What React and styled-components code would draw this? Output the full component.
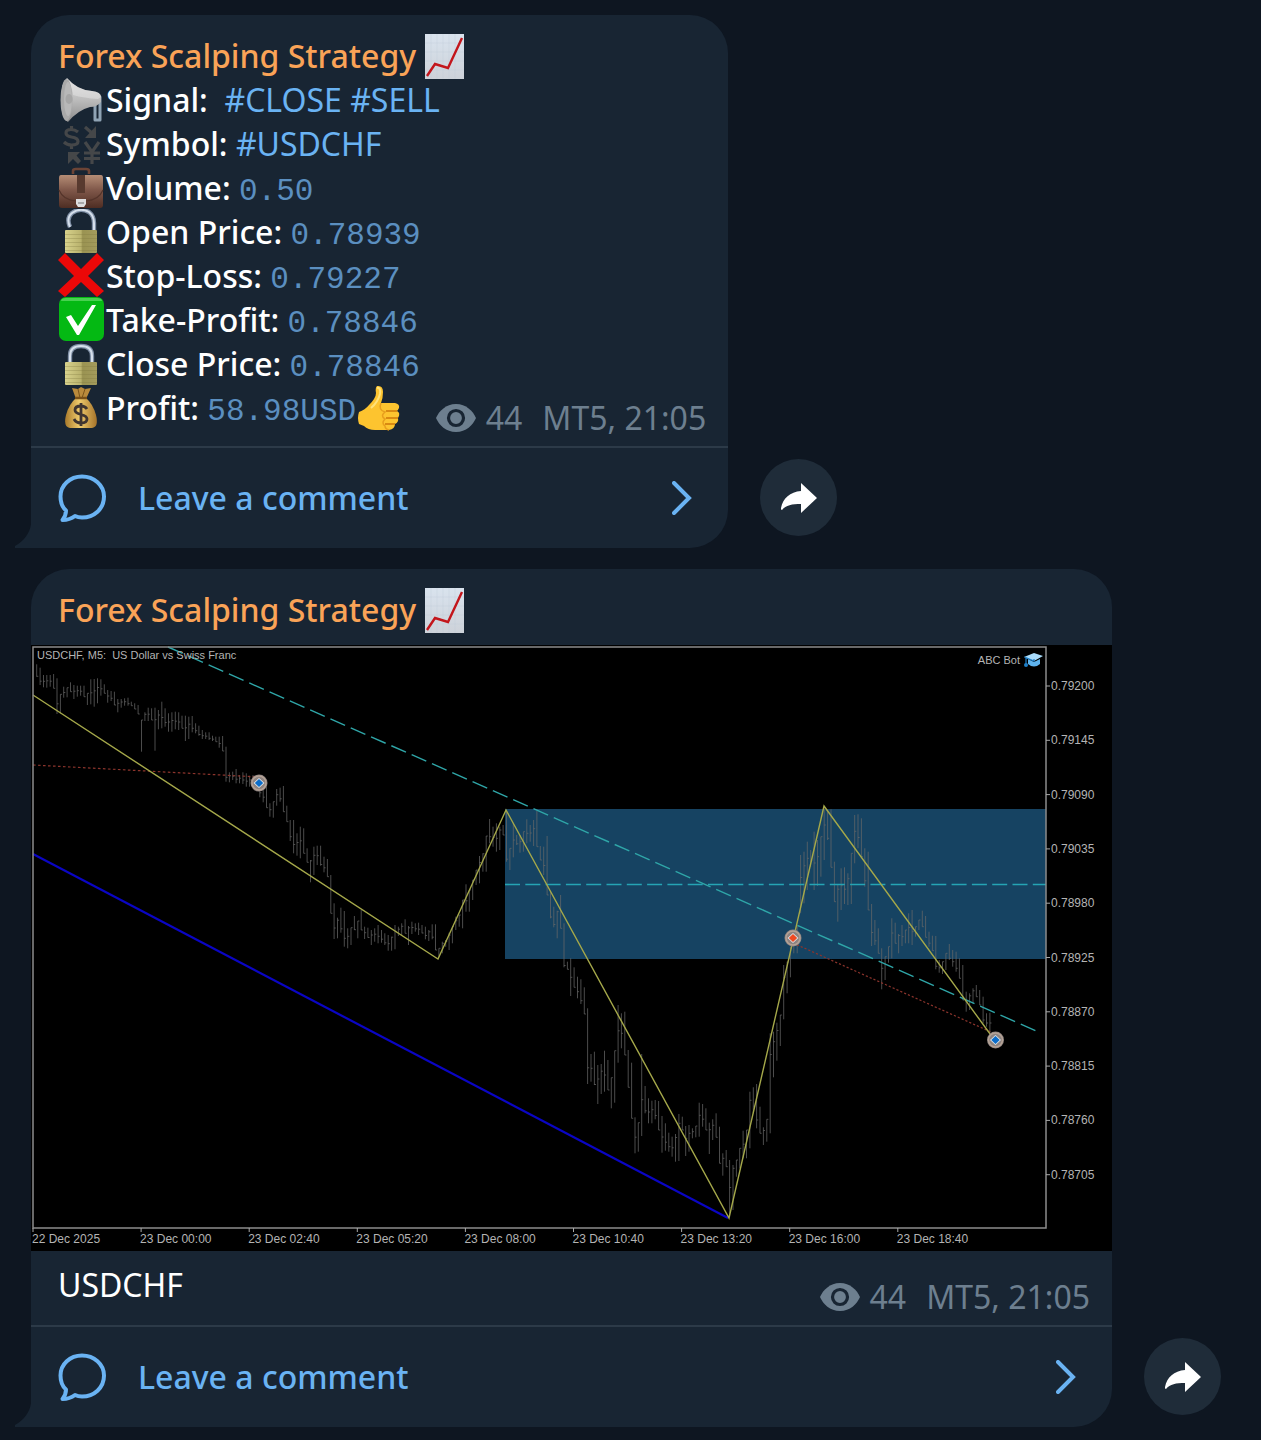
import styled, { createGlobalStyle } from "styled-components";

const signal = [
    {icon: "speaker", label: "Signal:\u00a0", tags: ["#CLOSE", "#SELL"]},
    {icon: "exchange", label: "Symbol:", tags: ["#USDCHF"]},
    {icon: "briefcase", label: "Volume:", value: "0.50"},
    {icon: "unlocked", label: "Open Price:", value: "0.78939"},
    {icon: "cross", label: "Stop-Loss:", value: "0.79227"},
    {icon: "check", label: "Take-Profit:", value: "0.78846"},
    {icon: "locked", label: "Close Price:", value: "0.78846"},
    {icon: "bag", label: "Profit:", value: "58.98USD", after: "thumb"},
];

// high/low of every M5 bar, three units to a pixel, measured from base
const barRuns = [
    {base: -10, bars: `88/125 98/150 120/157 120/158 120/155 117/160 130/237 178/235 155/188 158/187 142/170 150/192
    152/185 152/182 152/185 175/210 133/208 132/215 130/205 133/182 148/175 165/203 168/198 170/210 192/232 192/218
    190/212 188/212 200/212 205/222 210/237 255/350 232/258 218/258 220/255 218/347 225/283 200/280 220/275 235/290
    232/290 230/283 232/285 242/280 242/318 245/312 243/292 265/295 272/302 285/312 292/312 292/315 302/318 305/320
    305/338 303/348 335/440 412/442 410/435 402/445 420/445 412/447 415/455 422/455 420/450 425/460 440/487 445/502
    455/518 505/545 500/548 462/512 458/500 453/530 512/560 555/618 555/655 595/662 575/670 580/655 640/682 675/742
    635/720 632/690 632/692 665/712 672/725 720/835 805/912 848/910 818/893 828/935 880/940 878/930 843/885 858/910
    825/885 875/912 878/908 885/930 880/920 870/925`},
    {base: 135, bars: `450/488 460/495 465/512 470/512 435/508 440/468 430/465 418/460 438/495 425/462 430/455 428/465
    435/460 440/478 450/483 433/478 433/510 505/530 485/520 480/500 458/510 440/490 410/450 405/440 360/445 313/395
    330/395 300/360 270/315 228/310 220/275 168/275 117/190 140/200 130/215 140/210 135/165 95/245 205/270 130/232
    165/195 165/218 155/215 118/190 135/185 120/198 92/200 198/240 200/285 168/345 335/415 380/442 392/475 345/445
    430/562 545/568 535/648 562/622 590/655 598/672 622/702 685/912 822/905 815/915 855/972 852/942 812/935 840/930
    893/985 812/968 675/848 700/805 695/825 810/922 848/1015 1012/1120 1028/1115 822/1068 918/1000 955/1030 962/1030
    960/1018 963/1050 1008/1118 1030/1112 1058/1115 1070/1130 1062/1145 1002/1143 1010/1050 1038/1128 1035/1115
    1045/1075 1038/1072 968/1070 972/1040 985/1050 1028/1122 1018/1080 1000/1072 1040/1150 1120/1187 1110/1160
    1140/1310 1155/1290 1140/1190 1105/1165 1052/1135 1050/1135 935/1105 922/1000 912/1045 980/1060 1042/1095
    1018/1085 760/1060 755/892 728/842 705/798 555/718 545/640 500/592 490/520 440/520 225/400 215/370 185/330
    210/260 155/330 180/318 170/290 85/240 90/180 88/262 245/365 315/425 265/390 262/372 280/375 220/372 105/250
    103/205 115/230 205/320 215/390 372/498 420/495 445/520 505/628 530/600 500/548 415/535 428/490 462/520 435/498
    450/490 400/490 390/495 440/470 420/450 392/440 408/472 455/500 467/512 468/568 540/578 545/582 520/570 492/540
    510/560 515/575 535/595 555/660 635/695 640/690 625/670 615/650 630/675 650/730 700/740 698/760`},
];

const bars = barRuns.flatMap(({base, bars}) =>
    bars.trim().split(/\s+/).map((bar) => bar.split("/").map((v) => base + v / 3))
);

const prices = ["0.79200", "0.79145", "0.79090", "0.79035", "0.78980", "0.78925", "0.78870", "0.78815", "0.78760", "0.78705"];
const times = ["22 Dec 2025", "23 Dec 00:00", "23 Dec 02:40", "23 Dec 05:20", "23 Dec 08:00", "23 Dec 10:40", "23 Dec 13:20", "23 Dec 16:00", "23 Dec 18:40"];

const barPath = bars.map(([high, low], i) => {
    const x = 5.7 + i * 3.38;
    const next = bars[i + 1] || [high, low];
    const close = Math.min(low, Math.max(high, (next[0] + next[1]) / 2));
    return `M${x.toFixed(1)} ${high.toFixed(1)}V${low.toFixed(1)}M${x.toFixed(1)} ${close.toFixed(1)}h1.6`;
}).join("");

const Marker = ({x, y, color}) => (
    <g transform={`translate(${x} ${y})`}>
        <circle r="8.5" fill="#8d8380" />
        <circle r="7" fill="none" stroke="#b5a295" strokeWidth="1.5" />
        <path d="M-5.5 0L0-5L5.5 0L0 5Z" fill="#dfe5e9" />
        <path d="M-4.2 0L0-4L4.2 0L0 4Z" fill={color} />
    </g>
);

const Chart = () => (
    <ChartSvg viewBox="0 0 1081 606" role="img" aria-label="USDCHF M5 chart">
        <rect width="1081" height="606" fill="#000" />
        <rect x="474" y="164" width="541" height="150" fill="#164362" />
        <path d={barPath} stroke="#6a6a6a" strokeOpacity="0.72" fill="none" />
        <path d="M2 209L697 573" stroke="#0a05c4" strokeWidth="2.2" />
        <path d="M2 120L228 132" stroke="#8c342c" strokeWidth="1.2" strokeDasharray="2.6 2.4" />
        <path d="M762 298L960 387" stroke="#8c342c" strokeWidth="1.2" strokeDasharray="2.2 2" />
        <path d="M137 2L1010 388" stroke="#2fa6a8" strokeWidth="1.4" strokeDasharray="16 6.2" />
        <path d="M474 239.5H1015" stroke="#25a4b4" strokeWidth="1.6" strokeDasharray="15 5.3" />
        <path d="M2 50L407 314L475 165L698 573L793 161L962 393" stroke="#a5a84a" strokeWidth="1.4" fill="none" />
        <path d="M2 583V2H1015V583Z" fill="none" stroke="#8c8c8c" strokeWidth="1.5" />
        <Marker x={228} y={138} color="#0a6cc9" />
        <Marker x={762} y={293} color="#ee4a22" />
        <Marker x={964.5} y={395} color="#0a6cc9" />
        <ChartTitle x="6" y="14">{"USDCHF, M5:\u00a0 US Dollar vs Swiss Franc"}</ChartTitle>
        <ChartTitle x="989" y="19" textAnchor="end">ABC Bot</ChartTitle>
        <path d="M993 12L1003 8L1012 11L1003 16Z" fill="#a9dcfb" />
        <path d="M997 14L1003 17L1009 14V19Q1003 24 997 19Z" fill="#5fb4ee" />
        <path d="M993.5 12L1003 16V14M995 13V19" stroke="#1e7fc8" strokeWidth="1.2" fill="none" />
        <circle cx="995" cy="20" r="2" fill="#1e7fc8" />
        {prices.map((price, i) => (
            <g key={price}>
                <path d={`M1015 ${41 + i * 54.3}h4`} stroke="#a8a8a8" />
                <ChartText x="1020" y={45 + i * 54.3}>{price}</ChartText>
            </g>
        ))}
        {times.map((time, i) => (
            <g key={time}>
                <path d={`M${2 + i * 108.1} 583v4`} stroke="#a8a8a8" />
                <ChartText x={1 + i * 108.1} y="598">{time}</ChartText>
            </g>
        ))}
    </ChartSvg>
);

const Shackle = ({d}) => (
    <>
        <path d={d} fill="none" stroke="#7f8fa5" strokeWidth="4.4" />
        <path d={d} fill="none" stroke="#d5dfeb" strokeWidth="2" />
    </>
);

const LockBody = () => (
    <>
        <rect x="7" y="21" width="32" height="23" rx="1" fill="url(#brass)" />
        <path d="M7 25.5H39M7 29.5H39M7 33.5H39M7 37.5H39M7 41.5H39" stroke="#7d7840" strokeOpacity="0.3" />
    </>
);

const drawings = {
    speaker: (
        <>
            <path d="M34 20H42V43H37V27" fill="none" stroke="#8fa3b4" strokeWidth="3" strokeLinejoin="round" />
            <path d="M9 1Q19 13 34 14Q43 15 43 20V25Q39 30 32 30Q20 33 10 45Q3 41 3 23Q3 6 9 1Z" fill="url(#steel)" />
            <path d="M10 2Q19 13 34 14Q43 15 43 20L40 22Q26 21 15 18Q14 8 10 2Z" fill="#f1f1f1" fillOpacity="0.4" />
            <ellipse cx="8.5" cy="23" rx="6" ry="21" fill="#a9a9a9" />
            <ellipse cx="10" cy="22" rx="4" ry="17" fill="#b8b8b8" />
            <ellipse cx="11" cy="22" rx="3.5" ry="5" fill="#a6a6a6" />
        </>
    ),
    exchange: (
        <g fill="none" stroke="#454749" strokeWidth="3.2">
            <path d="M20 11Q17 8.5 13 8.5Q8 8.5 8 12Q8 15 13.5 16Q20 17 20 20.5Q20 24 13.5 24Q9 24 6 21M13.5 5V9M13.5 24V28" />
            <path d="M27 21L34 31L41 21M34 30V43M26 32H42M26 37.5H42" />
            <path d="M27 6L35 13" />
            <path d="M38 5V17H27Z" fill="#454749" stroke="none" />
            <path d="M10 31H22L18.5 34.5L23 40L20 43L15 38L10 43Z" fill="#454749" stroke="none" />
        </g>
    ),
    briefcase: (
        <>
            <path d="M15 9V6Q15 4 18 4H28Q31 4 31 6V9" fill="none" stroke="#6c4436" strokeWidth="2.6" />
            <path d="M3 10H43Q45 10 45 13V40Q45 43 42 43H4Q1 43 1 40V13Q1 10 3 10Z" fill="url(#leather)" />
            <path d="M1 25Q5 35 18 36H28Q41 35 45 25" fill="none" stroke="#54342a" strokeWidth="1.2" />
            <rect x="19" y="10" width="8" height="18" fill="#583a2f" />
            <path d="M18 34H28V39L26 42H20L18 39Z" fill="#dededf" />
            <path d="M20 38H26" stroke="#a9aaab" strokeWidth="2" />
        </>
    ),
    unlocked: (
        <>
            <Shackle d="M12 18Q8 9 14 4Q22-2 31 3Q36 7 36 14V21" />
            <LockBody />
        </>
    ),
    locked: (
        <>
            <Shackle d="M12 21V15Q12 5 23 5Q34 5 34 15V21" />
            <LockBody />
        </>
    ),
    cross: <path d="M7 0L23 16L39 0L46 7L30 23L46 38L39 44L23 29L7 44L0 38L16 23L0 7Z" fill="#ec0808" />,
    check: (
        <>
            <rect x="1" width="45" height="44" rx="7" fill="#04b913" />
            <path d="M8 1H39Q44 1 44 4H3Q3 1 8 1Z" fill="#65dc6b" fillOpacity="0.7" />
            <path d="M8 20L13 18L20 29L34 8H38L21 38H19Z" fill="#fff" />
        </>
    ),
    bag: (
        <>
            <path d="M14 3L20 4L23 2L27 4L33 3L28 14H18Z" fill="#b98a3c" />
            <path d="M20 4L22 13M27 4L24 13" stroke="#79531a" />
            <path d="M18 13H28Q35 19 38 30Q41 42 34 43H12Q5 42 8 30Q11 19 18 13Z" fill="url(#gold)" />
            <path d="M17 13H29" stroke="#795018" strokeWidth="2.5" />
            <path d="M29 24Q27 21 23 21Q17 21 17 25Q17 28 23 29.5Q29 31 29 34Q29 38 23 38Q18 38 16 34M23 18V41" fill="none" stroke="#3f3530" strokeWidth="2.8" />
        </>
    ),
    thumb: (
        <>
            <path d="M21 1Q27 0 27 7Q27 13 25 18H39Q44 19 43 23Q42 25 41 26Q45 28 42 33Q43 37 39 39Q39 44 33 45H19Q12 45 8 41L3 39Q1 33 3 27Q9 25 13 20Q20 13 20 8Q19 3 21 1Z" fill="#fdc42f" />
            <path d="M41 26H30M42 33H30M39 39H29" stroke="#d98a12" strokeWidth="1.8" />
            <path d="M25 18Q22 25 29 27Q24 31 29 34Q25 38 29 41Q29 44 33 45" fill="none" stroke="#e79e1d" strokeWidth="1.5" />
            <path d="M21 3Q25 2 24 9Q22 17 15 23" fill="none" stroke="#ffe27a" strokeWidth="2" />
        </>
    ),
    trend: (
        <>
            <rect x="1" y="1" width="39" height="45" fill="url(#paper)" />
            <path d="M7 1V46M13 1V46M19 1V46M25 1V46M31 1V46M1 10H40M1 19H40M1 28H40M1 37H40" stroke="#b8c6d6" strokeOpacity="0.3" />
            <path d="M3 43L11 31L24 35L38 5" fill="none" stroke="#c3161c" strokeWidth="2.4" />
        </>
    ),
};

const Emoji = ({name}) => (
    <EmojiSvg viewBox="0 0 47 46" aria-hidden="true">{drawings[name]}</EmojiSvg>
);

// gradients shared by the emoji
const Gradients = () => (
    <Defs aria-hidden="true">
        <linearGradient id="brass">
            <stop offset="0" stopColor="#d8d28c" />
            <stop offset="0.5" stopColor="#b9b26d" />
            <stop offset="0.55" stopColor="#9a9352" />
            <stop offset="1" stopColor="#a39b5c" />
        </linearGradient>
        <linearGradient id="steel" x2="0" y2="1">
            <stop offset="0" stopColor="#dcdcdc" />
            <stop offset="0.5" stopColor="#bcbcbc" />
            <stop offset="1" stopColor="#8b8b8b" />
        </linearGradient>
        <linearGradient id="leather" x2="0" y2="1">
            <stop offset="0" stopColor="#b58d76" />
            <stop offset="0.45" stopColor="#80584a" />
            <stop offset="1" stopColor="#4e2d23" />
        </linearGradient>
        <linearGradient id="gold">
            <stop offset="0" stopColor="#a97a2b" />
            <stop offset="0.45" stopColor="#efcb6c" />
            <stop offset="1" stopColor="#a5732a" />
        </linearGradient>
        <linearGradient id="paper" x2="0" y2="1">
            <stop offset="0" stopColor="#d9e3ee" />
            <stop offset="1" stopColor="#cdd2d9" />
        </linearGradient>
    </Defs>
);

const Meta = ({views, author, time}) => (
    <MetaRow>
        <EyeSvg viewBox="0 0 40 28" role="img" aria-label="Views">
            <path d="M20 0C30 0 37 7 40 14C37 21 30 28 20 28C10 28 3 21 0 14C3 7 10 0 20 0Z" fill="#6d7f8f" />
            <circle cx="20" cy="14" r="7.5" fill="none" stroke="#182533" strokeWidth="3.2" />
        </EyeSvg>
        <span>{views}</span>
        <Author>{author}, {time}</Author>
    </MetaRow>
);

const Post = ({wide, children}) => (
    <PostRow>
        <Bubble $wide={wide}>
            <Header>
                Forex Scalping Strategy <Emoji name="trend" />
            </Header>
            {children}
            <CommentButton type="button">
                <CommentSvg viewBox="0 0 48 48" aria-hidden="true">
                    <path d="M24 2.5C36 2.5 46 11 46 22.5C46 35 36 43.5 24 43.5C21 43.5 19 43 17 42C13 45 9 46 4.5 46C7 43 8 40 8 36.5C4 33 2.5 28 2.5 22.5C2.5 11 12 2.5 24 2.5Z" />
                </CommentSvg>
                <span>Leave a comment</span>
                <ChevronSvg viewBox="0 0 20 34" aria-hidden="true">
                    <path d="M2 2L17 17L2 32" />
                </ChevronSvg>
            </CommentButton>
            <TailSvg viewBox="0 0 16 24" aria-hidden="true">
                <path d="M16 0C15 9 9 17 0 22V24H16Z" fill="#182533" />
            </TailSvg>
        </Bubble>
        <ShareButton type="button" aria-label="Share">
            <svg width="36" height="32" viewBox="0 0 36 32" aria-hidden="true">
                <path d="M20 1L36 16L20 31V22C11 22 5 23 1 28C0 28 0 27 0 26C2 16 9 10 20 9Z" fill="#fff" />
            </svg>
        </ShareButton>
    </PostRow>
);

const App = () => (
    <>
        <GlobalStyle />
        <Gradients />
        <Feed>
            <Post>
                <Body>
                    <Fields>
                        {signal.map(({icon, label, tags, value, after}) => (
                            <Field key={label}>
                                <Emoji name={icon} />
                                <Label>{label}</Label>
                                {tags && tags.map((tag) => (
                                    <span key={tag}> <Tag href={tag}>{tag}</Tag></span>
                                ))}
                                {value && <span> <Value>{value}</Value></span>}
                                {after && <Emoji name={after} />}
                            </Field>
                        ))}
                    </Fields>
                    <Meta views="44" author="MT5" time="21:05" />
                </Body>
            </Post>
            <Post wide>
                <Chart />
                <Body>
                    <Caption>USDCHF</Caption>
                    <Meta views="44" author="MT5" time="21:05" />
                </Body>
            </Post>
        </Feed>
    </>
);

export default App;

const GlobalStyle = createGlobalStyle`
body{
    margin: 0;
    background: #0e1621;
    color: #fff;
    font-family: "Noto Sans", "Open Sans", sans-serif;
    font-size: 32px;
    line-height: 44px;
}
button{
    border: none;
    font: inherit;
    cursor: pointer;
}
`
const Defs = styled.svg`
position: absolute;
width: 0;
height: 0;
`
const Feed = styled.main`
display: flex;
flex-direction: column;
gap: 21px;
padding: 15px 40px 13px 31px;
`
const PostRow = styled.article`
display: flex;
align-items: flex-end;
gap: 32px;
`
const Bubble = styled.div`
position: relative;
flex: ${({$wide}) => ($wide ? "1" : "0 1 auto")};
min-width: 0;
background: #182533;
border-radius: 38px 38px 38px 0;
`
const Header = styled.header`
padding: 19px 27px 0;
color: #faa357;
font-weight: 500;
white-space: nowrap;
`
const EmojiSvg = styled.svg`
width: 47px;
height: 46px;
margin: -1px 1px -1px 0;
vertical-align: top;
`
const Body = styled.div`
display: flex;
justify-content: space-between;
align-items: flex-end;
padding: 0 22px 6px 27px;
border-bottom: 2px solid #2c3a48;
`
/* the last row is short, so the meta may slide under the widest one */
const Fields = styled.ul`
margin: 0 -4px 0 0;
padding: 0 0 10px;
list-style: none;
white-space: nowrap;
`
const Field = styled.li`
height: 44px;
`
const Label = styled.span`
font-weight: 500;
`
const Tag = styled.a`
color: #6ab3f3;
text-decoration: none;
`
const Value = styled.code`
color: #5b8fc0;
font-family: "Liberation Mono", monospace;
font-size: 31px;
`
const Caption = styled.p`
margin: 0;
padding: 12px 0;
`
const MetaRow = styled.div`
display: flex;
align-items: center;
color: #6d7f8f;
white-space: nowrap;
`
const EyeSvg = styled.svg`
width: 40px;
height: 28px;
margin-right: 10px;
`
const Author = styled.span`
margin-left: 20px;
`
const CommentButton = styled.button`
display: flex;
align-items: center;
gap: 32px;
width: 100%;
height: 100px;
padding: 0 36px 0 27px;
background: none;
color: #6ab3f3;
font-weight: 500;
text-align: left;
`
const CommentSvg = styled.svg`
width: 48px;
height: 48px;
fill: none;
stroke: #6ab3f3;
stroke-width: 4px;
stroke-linejoin: round;
`
const ChevronSvg = styled.svg`
width: 20px;
height: 34px;
margin-left: auto;
fill: none;
stroke: #6ab3f3;
stroke-width: 4px;
stroke-linecap: round;
`
const TailSvg = styled.svg`
position: absolute;
left: -16px;
bottom: 0;
width: 16px;
height: 24px;
`
const ShareButton = styled.button`
display: flex;
flex: none;
justify-content: center;
align-items: center;
width: 77px;
height: 77px;
margin-bottom: 12px;
padding: 0;
border-radius: 50%;
background: #1f2c39;
`
const ChartSvg = styled.svg`
display: block;
width: 100%;
margin-top: 13px;
`
const ChartText = styled.text`
fill: #b4b4b4;
font-family: "Liberation Sans", sans-serif;
font-size: 12px;
`
const ChartTitle = styled(ChartText)`
font-size: 11px;
`
